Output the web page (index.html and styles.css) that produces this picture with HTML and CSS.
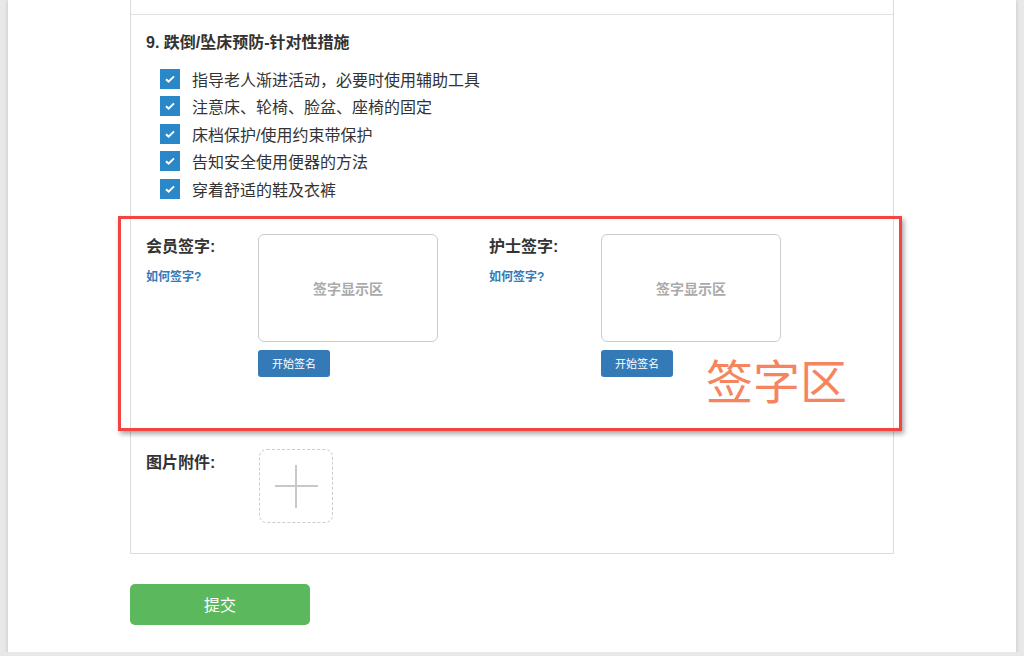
FILE: index.html
```html
<!DOCTYPE html>
<html lang="zh-CN">
<head>
    <meta charset="UTF-8">
    <meta name="viewport" content="width=device-width, initial-scale=1.0">
    <title>护理评估</title>
    <link rel="stylesheet" href="styles.css">
</head>
<body>
<div class="sheet">
    <div class="panel">
        <div class="prev"></div>

        <div class="section">
            <h3 class="section-title">9. 跌倒/坠床预防-针对性措施</h3>
            <ul class="checklist">
                <li><span class="check"><svg width="12" height="10" viewBox="0 0 12 10"><path d="M2 5.2l2.6 2.4L10 2.4" fill="none" stroke="#fff" stroke-width="2"/></svg></span>指导老人渐进活动，必要时使用辅助工具</li>
                <li><span class="check"><svg width="12" height="10" viewBox="0 0 12 10"><path d="M2 5.2l2.6 2.4L10 2.4" fill="none" stroke="#fff" stroke-width="2"/></svg></span>注意床、轮椅、脸盆、座椅的固定</li>
                <li><span class="check"><svg width="12" height="10" viewBox="0 0 12 10"><path d="M2 5.2l2.6 2.4L10 2.4" fill="none" stroke="#fff" stroke-width="2"/></svg></span>床档保护/使用约束带保护</li>
                <li><span class="check"><svg width="12" height="10" viewBox="0 0 12 10"><path d="M2 5.2l2.6 2.4L10 2.4" fill="none" stroke="#fff" stroke-width="2"/></svg></span>告知安全使用便器的方法</li>
                <li><span class="check"><svg width="12" height="10" viewBox="0 0 12 10"><path d="M2 5.2l2.6 2.4L10 2.4" fill="none" stroke="#fff" stroke-width="2"/></svg></span>穿着舒适的鞋及衣裤</li>
            </ul>
        </div>

        <div class="sign-area">
            <div class="sign-group">
                <div class="sign-label">
                    <div class="label">会员签字:</div>
                    <a class="how" href="#">如何签字?</a>
                </div>
                <div class="sign-field">
                    <div class="sign-box">签字显示区</div>
                    <button class="btn-sign">开始签名</button>
                </div>
            </div>
            <div class="sign-group">
                <div class="sign-label">
                    <div class="label">护士签字:</div>
                    <a class="how" href="#">如何签字?</a>
                </div>
                <div class="sign-field">
                    <div class="sign-box">签字显示区</div>
                    <button class="btn-sign">开始签名</button>
                </div>
            </div>

            <!-- 标注框 -->
            <div class="mark">
                <span class="mark-text">签字区</span>
            </div>
        </div>

        <div class="attach">
            <div class="label attach-label">图片附件:</div>
            <div class="upload">
                <svg width="44" height="44" viewBox="0 0 44 44">
                    <path d="M22 1v44M1 22h43" stroke="#c8c8c8" stroke-width="2"/>
                </svg>
            </div>
        </div>
    </div>

    <button class="btn-submit">提交</button>
</div>
</body>
</html>
```

FILE: styles.css
```css
body{
    margin: 0;
    background: #e8e8e8;
    font-family: "Liberation Sans", "Noto Sans CJK SC", sans-serif;
    color: #333;
}

.sheet{
    width: 1008px;
    margin: 0 8px;
    background: #fff;
    box-shadow: 0 1px 4px rgba(0,0,0,.18);
    padding-bottom: 27px;
}

.panel{
    width: 764px;
    margin-left: 122px;
    box-sizing: border-box;
    border: 1px solid #dcdcdc;
    border-top: none;
}

.prev{
    height: 14px;
    border-bottom: 1px solid #e2e2e2;
}

.section{
    padding: 17px 15px 0;
}

.section-title{
    margin: 0;
    font-size: 16px;
    line-height: 22px;
    font-weight: bold;
}

.checklist{
    list-style: none;
    margin: 11px 0 0;
    padding: 0 0 0 14px;
}
.checklist li{
    display: flex;
    align-items: center;
    height: 27.5px;
    font-size: 16px;
}

.check{
    width: 20px;
    height: 20px;
    background: #2a87c8;
    margin-right: 12px;
    display: flex;
    align-items: center;
    justify-content: center;
}

.sign-area{
    position: relative;
    display: flex;
    padding: 31px 15px 0;
    height: 143px;
}

.sign-group{
    display: flex;
    width: 343px;
}

.sign-label{
    width: 112px;
    padding-top: 1px;
}

.label{
    font-size: 16px;
    font-weight: bold;
    line-height: 24px;
}

.how{
    display: block;
    margin-top: 8px;
    font-size: 12px;
    font-weight: bold;
    color: #337ab7;
    text-decoration: none;
}

.sign-box{
    width: 180px;
    height: 108px;
    box-sizing: border-box;
    border: 1px solid #ccc;
    border-radius: 6px;
    display: flex;
    align-items: center;
    justify-content: center;
    color: #aaa;
    font-size: 14px;
    font-weight: bold;
}

.btn-sign{
    margin-top: 8px;
    width: 72px;
    height: 27px;
    border: none;
    border-radius: 3px;
    background: #337ab7;
    color: #fff;
    font-family: inherit;
    font-size: 11px;
    padding: 0;
}

.mark{
    position: absolute;
    left: -13px;
    top: 13px;
    width: 784px;
    height: 215px;
    box-sizing: border-box;
    border: 3px solid #f44343;
    box-shadow: 2px 3px 5px rgba(0,0,0,.35);
}

.mark-text{
    position: absolute;
    right: 52px;
    bottom: 26px;
    font-family: "Noto Sans CJK SC", sans-serif;
    font-size: 47px;
    line-height: 1;
    color: #f5855e;
}

.attach{
    display: flex;
    padding: 72px 15px 30px;
}

.attach-label{
    width: 113px;
    padding-top: 2px;
}

.upload{
    width: 74px;
    height: 74px;
    box-sizing: border-box;
    border: 1px dashed #ccc;
    border-radius: 8px;
    display: flex;
    align-items: center;
    justify-content: center;
}

.btn-submit{
    display: block;
    margin: 30px 0 0 122px;
    width: 180px;
    height: 41px;
    border: none;
    border-radius: 5px;
    background: #5cb85c;
    color: #fff;
    font-family: inherit;
    font-size: 16px;
}
```
